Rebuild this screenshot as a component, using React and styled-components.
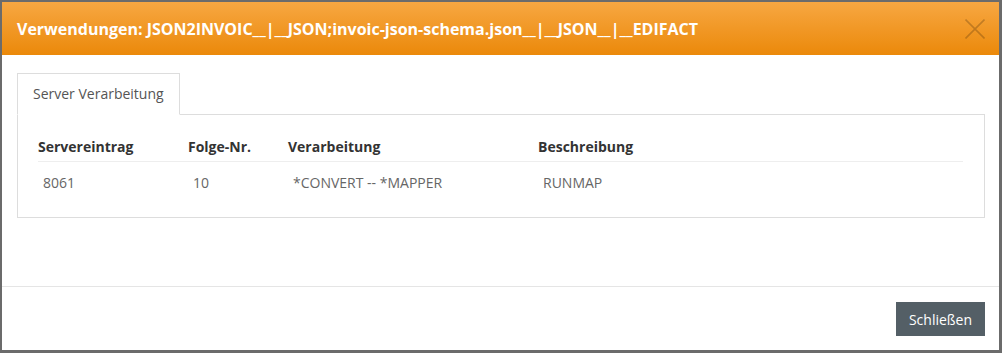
import React from "react";
import styled, { createGlobalStyle } from "styled-components";

const Global = createGlobalStyle`
  html, body { margin: 0; padding: 0; }
  body {
    background: #6b6b6b;
    font-family: "Open Sans", "DejaVu Sans", sans-serif;
  }
  * { box-sizing: border-box; }
`;

const Backdrop = styled.div`
  width: 1002px;
  height: 353px;
  padding: 2px 3px 3px 2px;
`;

const Modal = styled.div`
  width: 997px;
  height: 348px;
  background: #ffffff;
  display: flex;
  flex-direction: column;
`;

const Header = styled.div`
  height: 53px;
  flex: none;
  display: flex;
  align-items: center;
  justify-content: space-between;
  padding: 0 14px 0 15px;
  background: linear-gradient(to bottom, #f7a742 0%, #eb890a 100%);
`;

const Title = styled.h4`
  margin: 0;
  color: #ffffff;
  font-size: 16px;
  font-weight: 700;
  line-height: 22px;
  white-space: nowrap;
`;

const CloseButton = styled.button`
  border: 0;
  background: transparent;
  padding: 0;
  width: 20px;
  height: 20px;
  display: flex;
  cursor: pointer;
`;

const Body = styled.div`
  flex: 1;
  padding: 18px 14px 0 15px;
`;

const TabList = styled.div`
  display: flex;
  border-bottom: 1px solid #dddddd;
`;

const Tab = styled.div`
  padding: 10px 15px;
  line-height: 20px;
  font-size: 14px;
  color: #555555;
  background: #ffffff;
  border: 1px solid #dddddd;
  border-bottom-color: transparent;
  margin-bottom: -1px;
  width: 163px;
  white-space: nowrap;
`;

const Panel = styled.div`
  border: 1px solid #dddddd;
  border-top: none;
  padding: 18px 21px 17px 20px;
`;

const Table = styled.table`
  width: 100%;
  border-collapse: collapse;
  table-layout: fixed;
`;

const Th = styled.th`
  text-align: left;
  font-size: 14px;
  font-weight: 700;
  color: #333333;
  line-height: 20px;
  padding: 4px 0 4px 0;
  border-bottom: 1px solid #eeeeee;
  width: ${(p) => (p.$w ? `${p.$w}px` : "auto")};
`;

const Td = styled.td`
  font-size: 14px;
  color: #666666;
  line-height: 20px;
  padding: 11px 5px 7px 5px;
`;

const Footer = styled.div`
  flex: none;
  border-top: 1px solid #e5e5e5;
  padding: 15px 14px 14px;
  display: flex;
  justify-content: flex-end;
`;

const Button = styled.button`
  height: 34px;
  padding: 0 13px;
  border: 0;
  border-radius: 0;
  background: #545f66;
  color: #ffffff;
  font-family: "Open Sans", "DejaVu Sans", sans-serif;
  font-size: 14px;
  cursor: pointer;
`;

const columns = [
  { label: "Servereintrag", w: 150 },
  { label: "Folge-Nr.", w: 100 },
  { label: "Verarbeitung", w: 250 },
  { label: "Beschreibung" },
];

const rows = [["8061", "10", "*CONVERT -- *MAPPER", "RUNMAP"]];

export default function App() {
  return (
    <>
      <Global />
      <Backdrop>
        <Modal>
          <Header>
            <Title>Verwendungen: JSON2INVOIC__|__JSON;invoic-json-schema.json__|__JSON__|__EDIFACT</Title>
            <CloseButton aria-label="close">
              <svg width="20" height="20" viewBox="0 0 20 20">
                <path d="M0.5 0.5 L19.5 19.5 M19.5 0.5 L0.5 19.5" stroke="rgba(0,0,0,0.2)" strokeWidth="1.6" fill="none" />
              </svg>
            </CloseButton>
          </Header>
          <Body>
            <TabList>
              <Tab>Server Verarbeitung</Tab>
            </TabList>
            <Panel>
              <Table>
                <thead>
                  <tr>
                    {columns.map((c) => (
                      <Th key={c.label} $w={c.w}>{c.label}</Th>
                    ))}
                  </tr>
                </thead>
                <tbody>
                  {rows.map((r, i) => (
                    <tr key={i}>
                      {r.map((v, j) => (
                        <Td key={j}>{v}</Td>
                      ))}
                    </tr>
                  ))}
                </tbody>
              </Table>
            </Panel>
          </Body>
          <Footer>
            <Button>Schließen</Button>
          </Footer>
        </Modal>
      </Backdrop>
    </>
  );
}
